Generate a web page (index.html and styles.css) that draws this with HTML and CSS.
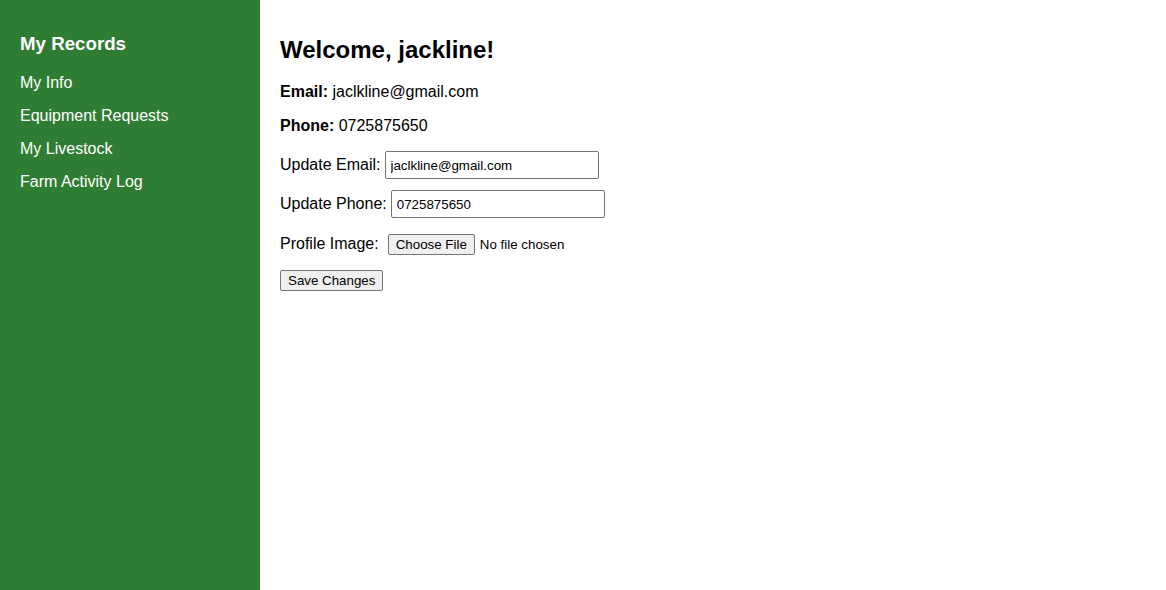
FILE: index.html
```html
<!DOCTYPE html>
<html lang="en">
<head>
<meta charset="utf-8">
<title>My Info</title>
<link rel="stylesheet" href="styles.css">
</head>
<body>
<div class="layout">
  <aside class="sidebar">
    <h3 class="sidebar-title">My Records</h3>
    <nav class="nav">
      <a href="#" class="nav-link">My Info</a>
      <a href="#" class="nav-link">Equipment Requests</a>
      <a href="#" class="nav-link">My Livestock</a>
      <a href="#" class="nav-link">Farm Activity Log</a>
    </nav>
  </aside>
  <main class="main">
    <h2 class="welcome">Welcome, jackline!</h2>
    <p class="info"><strong>Email:</strong> jaclkline@gmail.com</p>
    <p class="info"><strong>Phone:</strong> 0725875650</p>
    <form class="form">
      <div class="row row-email">
        <label class="label" for="email">Update Email:</label>
        <input class="text-input" id="email" type="email" value="jaclkline@gmail.com">
      </div>
      <div class="row row-phone">
        <label class="label" for="phone">Update Phone:</label>
        <input class="text-input" id="phone" type="text" value="0725875650">
      </div>
      <div class="row row-file">
        <label class="label" for="img">Profile Image:</label>
        <input class="file-input" id="img" type="file">
      </div>
      <div class="row row-save">
        <button type="button" class="btn">Save Changes</button>
      </div>
    </form>
  </main>
</div>
</body>
</html>
```

FILE: styles.css
```css
html, body {
  margin: 0;
  padding: 0;
  height: 100%;
}
body {
  font-family: "Liberation Sans", Arial, sans-serif;
  font-size: 16px;
  color: #000;
  background: #fff;
}
.layout {
  display: flex;
  height: 590px;
}
.sidebar {
  width: 220px;
  flex: 0 0 220px;
  padding: 20px;
  background: #2e7d32;
  color: #fff;
}
.sidebar-title {
  font-size: 18.72px;
  font-weight: bold;
  margin: 13px 0 19px;
  line-height: 22px;
}
.nav {
  display: flex;
  flex-direction: column;
  gap: 15px;
}
.nav-link {
  color: #fff;
  text-decoration: none;
  font-size: 16px;
  line-height: 18px;
}
.main {
  flex: 1;
  padding: 20px;
}
.welcome {
  font-size: 24px;
  font-weight: bold;
  line-height: 28px;
  margin: 16px 0 19px;
}
.info {
  margin: 0 0 16px;
  line-height: 18px;
}
.form {
  margin: 0;
}
.row {
  display: flex;
  align-items: baseline;
  gap: 4px;
}
.row-email { margin-top: 1px; }
.row-phone { margin-top: 11px; }
.row-file { margin-top: 16px; gap: 9px; }
.row-save { margin-top: 15px; }
.label {
  font-size: 16px;
}
.text-input {
  box-sizing: border-box;
  width: 214px;
  height: 28px;
  padding: 5px;
  border: 1px solid #767676;
  border-radius: 2px;
  font-family: "Liberation Sans", Arial, sans-serif;
  font-size: 13.333px;
  color: #000;
  background: #fff;
}
.file-input {
  font-family: "Liberation Sans", Arial, sans-serif;
  font-size: 13.333px;
  color: #000;
  padding: 0;
}
.file-input::file-selector-button {
  font-family: "Liberation Sans", Arial, sans-serif;
  font-size: 13.333px;
  background: #efefef;
  border: 1px solid #767676;
  border-radius: 2px;
  padding: 1px 7px;
  margin-right: 5px;
  color: #000;
  height: 21px;
}
.btn {
  font-family: "Liberation Sans", Arial, sans-serif;
  font-size: 13.333px;
  background: #efefef;
  border: 1px solid #767676;
  border-radius: 2px;
  padding: 1px 7px;
  color: #000;
  height: 21px;
}
```
